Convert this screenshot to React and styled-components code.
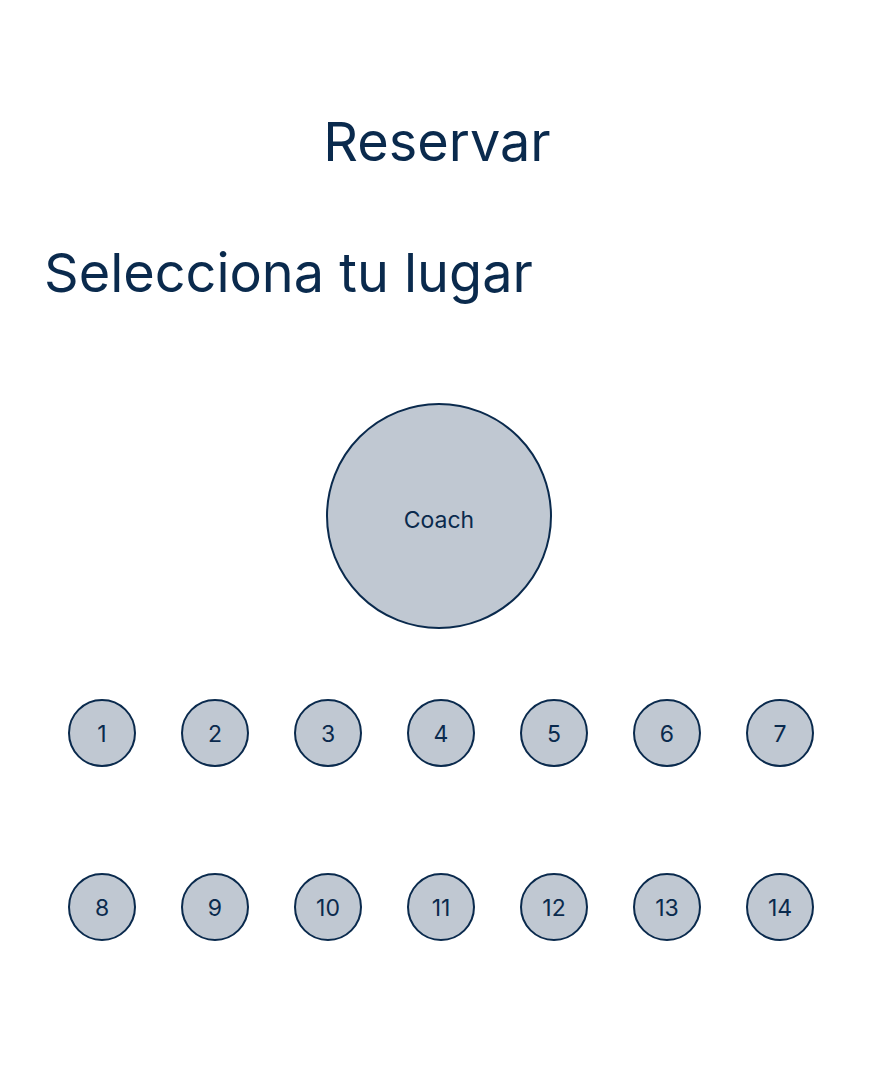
import React from "react";
import styled, { createGlobalStyle } from "styled-components";

const GlobalStyle = createGlobalStyle`
  * { box-sizing: border-box; }
  body {
    margin: 0;
    background: #ffffff;
    color: #0a2a4d;
    font-family: Inter, "Liberation Sans", sans-serif;
    font-weight: 400;
  }
`;

const Page = styled.main`
  display: flex;
  flex-direction: column;
  padding: 108px 44px 124px;
`;

const Title = styled.h1`
  margin: 0;
  font-size: 54px;
  line-height: 68px;
  font-weight: 400;
  text-align: center;
`;

const Subtitle = styled.h2`
  margin: 63px 0 0;
  font-size: 54px;
  line-height: 68px;
  font-weight: 400;
`;

const Coach = styled.div`
  display: flex;
  align-items: center;
  justify-content: center;
  align-self: center;
  width: 226px;
  height: 226px;
  margin: 96px 0 70px 4px;
  padding-top: 8px;
  border: 2px solid #0a2a4d;
  border-radius: 50%;
  background: #c0c8d2;
  font-size: 23px;
  line-height: 28px;
`;

const Seats = styled.div`
  display: grid;
  grid-template-columns: repeat(7, 68px);
  justify-content: space-between;
  row-gap: 106px;
  padding: 0 16px 0 24px;
`;

const Seat = styled.button`
  width: 68px;
  height: 68px;
  padding: 2px 0 0;
  border: 2px solid #0a2a4d;
  border-radius: 50%;
  background: #c0c8d2;
  color: inherit;
  font-family: inherit;
  font-weight: inherit;
  font-size: 23px;
  line-height: 28px;
  text-align: center;
  cursor: pointer;
`;

const seats = Array.from({ length: 14 }, (_, i) => i + 1);

export default function App() {
  return (
    <>
      <GlobalStyle />
      <Page>
        <Title>Reservar</Title>
        <Subtitle>Selecciona tu lugar</Subtitle>
        <Coach>Coach</Coach>
        <Seats>
          {seats.map((n) => (
            <Seat key={n} type="button">{n}</Seat>
          ))}
        </Seats>
      </Page>
    </>
  );
}
